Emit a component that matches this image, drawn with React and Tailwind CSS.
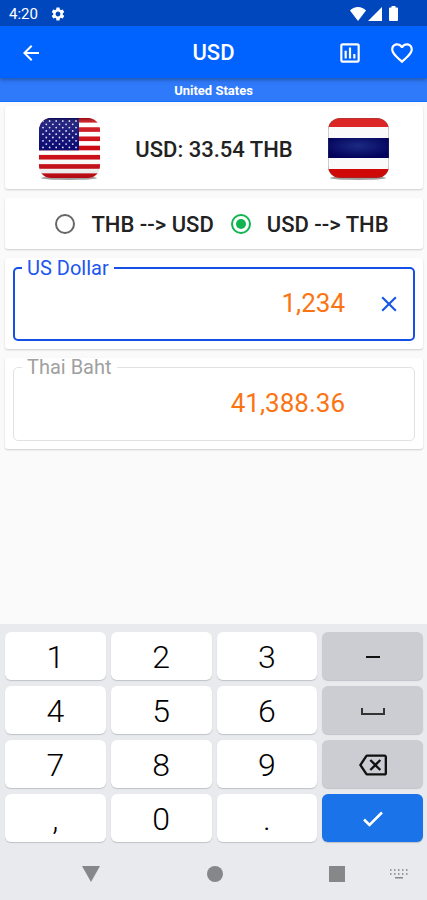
import { useState } from 'react';
import {
  MdArrowBack,
  MdClose,
  MdFavoriteBorder,
  MdOutlineAssessment,
  MdOutlineBackspace,
  MdSettings,
} from 'react-icons/md';

const RATE = 33.54;

function StatusBar() {
  return (
    <div className="flex h-[26px] items-center bg-[#0047bd] pr-[29px] pl-[9px] text-white">
      <span className="pt-[2px] text-[15px] leading-5">4:20</span>
      <MdSettings className="mt-px ml-3 size-4" />
      <div className="mt-px ml-auto flex items-center">
        <svg className="h-[14px] w-4" viewBox="0 0 16 14" fill="currentColor" aria-hidden="true">
          <path d="M8 14 0 3.4C2 1.400 5 0 8 0s6 1.400 8 3.400z" />
        </svg>
        <svg className="ml-[2px] h-[14px] w-[14px]" viewBox="0 0 14 14" fill="currentColor" aria-hidden="true">
          <path d="M14 0v14H0z" />
        </svg>
        <svg className="ml-[7px] h-[15px] w-[9px]" viewBox="0 0 9 15" fill="currentColor" aria-hidden="true">
          <path d="M2.500 0h4v1.500H8a1 1 0 0 1 1 1V14a1 1 0 0 1-1 1H1a1 1 0 0 1-1-1V2.500a1 1 0 0 1 1-1h1.500z" />
        </svg>
      </div>
    </div>
  );
}

function Star({ x, y }) {
  return <circle cx={x} cy={y} r="0.900" fill="#dfe3ff" />;
}

function UsFlag() {
  const stars = [];
  for (let row = 0; row < 9; row += 1) {
    const odd = row % 2;
    for (let col = 0; col < (odd ? 5 : 6); col += 1) {
      stars.push(<Star key={`${row}-${col}`} x={4 + col * 6.600 + odd * 3.300} y={3 + row * 3.300} />);
    }
  }
  return (
    <svg className="h-16 w-[61px]" viewBox="0 0 61 64" role="img" aria-label="United States flag">
      <defs>
        <clipPath id="us-clip">
          <rect width="61" height="60" rx="12" />
        </clipPath>
        <linearGradient id="us-shade" x1="0" y1="0" x2="0" y2="1">
          <stop offset="0" stopColor="#000" stopOpacity=".3" />
          <stop offset=".08" stopColor="#fff" stopOpacity=".12" />
          <stop offset=".5" stopColor="#fff" stopOpacity="0" />
          <stop offset="1" stopColor="#000" stopOpacity=".12" />
        </linearGradient>
      </defs>
      <ellipse cx="30" cy="60" rx="28" ry="2" fill="#777" opacity=".7" />
      <g clipPath="url(#us-clip)">
        <rect width="61" height="60" fill="#fff" />
        {[0, 1, 2, 3, 4, 5, 6].map((i) => (
          <rect key={i} y={i * 9.230} width="61" height="4.620" fill="#cc0a14" />
        ))}
        <rect width="40" height="32.300" fill="#0b0b72" />
        {stars}
        <rect width="61" height="60" fill="url(#us-shade)" />
      </g>
    </svg>
  );
}

function ThaiFlag() {
  return (
    <svg className="h-16 w-[61px]" viewBox="0 0 61 64" role="img" aria-label="Thailand flag">
      <defs>
        <clipPath id="th-clip">
          <rect width="61" height="60" rx="12" />
        </clipPath>
        <radialGradient id="th-blue" cx=".5" cy=".4" r=".6">
          <stop offset="0" stopColor="#1c2a82" />
          <stop offset="1" stopColor="#03035c" />
        </radialGradient>
      </defs>
      <ellipse cx="30" cy="60" rx="28" ry="2" fill="#777" opacity=".7" />
      <g clipPath="url(#th-clip)">
        <rect width="61" height="60" fill="#fafafa" />
        <rect width="61" height="9" fill="#dc2626" />
        <rect y="20" width="61" height="20" fill="url(#th-blue)" />
        <rect y="51" width="61" height="9" fill="#cf0808" />
        <rect width="61" height="60" rx="12" fill="none" stroke="#555" strokeOpacity=".5" />
      </g>
    </svg>
  );
}

function Direction({ value, label, checked, onChange }) {
  return (
    <label className="flex items-center gap-4">
      <input
        type="radio"
        name="direction"
        value={value}
        checked={checked}
        onChange={onChange}
        className="grid size-5 appearance-none place-items-center rounded-full border-2 border-[#666] before:size-[10px] before:rounded-full checked:border-[#10b552] checked:before:bg-[#10b552]"
      />
      <span>{label}</span>
    </label>
  );
}

function Key({ label, tone = 'bg-white', children, onClick }) {
  return (
    <button
      type="button"
      aria-label={label}
      onClick={onClick}
      className={`flex h-12 items-center justify-center rounded-md pt-[2px] text-[32px] leading-none font-light text-black shadow-[0_1px_1px_#bfc2c8] ${tone}`}
    >
      {children}
    </button>
  );
}

const card = 'rounded-[3px] bg-white shadow-[0_1px_2px_rgba(0,0,0,0.18)]';
const grey = 'bg-[#cccdd3]';

export default function App() {
  const [amount, setAmount] = useState('1,234');
  const [direction, setDirection] = useState('usd-thb');

  const number = Number(amount.replace(/,/g, '')) || 0;
  const converted = (direction === 'usd-thb' ? number * RATE : number / RATE).toLocaleString('en-US', {
    minimumFractionDigits: 2,
    maximumFractionDigits: 2,
  });
  const type = (char) => () => setAmount((current) => current + char);

  return (
    <div className="flex min-h-screen flex-col bg-[#fafafa] font-['Roboto',sans-serif] text-[#222]">
      <StatusBar />
      <header className="relative grid h-[52px] grid-cols-[1fr_auto_1fr] items-center bg-[#0062ff] px-3 pt-[2px] text-white shadow-[0_2px_4px_rgba(0,0,0,0.3)]">
        <button type="button" aria-label="Back" className="ml-[7px] justify-self-start">
          <MdArrowBack className="size-6" />
        </button>
        <h1 className="text-[22px] leading-7 font-medium">USD</h1>
        <div className="flex items-center gap-[26px] justify-self-end">
          <button type="button" aria-label="Chart">
            <MdOutlineAssessment className="size-[26px]" />
          </button>
          <button type="button" aria-label="Add to favourites">
            <MdFavoriteBorder className="size-[26px]" />
          </button>
        </div>
      </header>
      <p className="h-6 border-b border-[#0d72ff] bg-[#2f7afb] text-center text-[13px] leading-[25px] font-bold text-white">
        United States
      </p>

      <main className="flex flex-col gap-[9px] pt-1 pr-1 pb-4 pl-[5px]">
        <section className={`flex h-[83px] items-center justify-between px-[34px] pt-1 ${card}`}>
          <UsFlag />
          <p className="text-[22px] leading-7 font-medium">USD: 33.54 THB</p>
          <ThaiFlag />
        </section>

        <div
          role="radiogroup"
          aria-label="Direction"
          className={`flex h-[51px] items-center justify-center gap-[17px] pt-px pl-4 text-[22px] font-medium ${card}`}
        >
          <Direction
            value="thb-usd"
            label="THB --> USD"
            checked={direction === 'thb-usd'}
            onChange={() => setDirection('thb-usd')}
          />
          <Direction
            value="usd-thb"
            label="USD --> THB"
            checked={direction === 'usd-thb'}
            onChange={() => setDirection('usd-thb')}
          />
        </div>

        <section className={`px-2 pb-2 ${card}`}>
          <fieldset className="min-w-0 rounded-[5px] border-2 border-[#1450e6] pr-[11px] pl-3">
            <legend className="-ml-[5px] px-[5px] text-[20px] leading-5 text-[#1c55f0]">
              <label htmlFor="usd">US Dollar</label>
            </legend>
            <div className="flex h-[61px] items-center gap-[31px] pb-[10px]">
              <input
                id="usd"
                type="text"
                inputMode="decimal"
                value={amount}
                onChange={(event) => setAmount(event.target.value)}
                className="h-9 min-w-0 flex-1 text-right text-[26px] text-[#fb7414] outline-none"
              />
              <button type="button" aria-label="Clear" onClick={() => setAmount('')}>
                <MdClose className="size-[26px] text-[#1457e8]" />
              </button>
            </div>
          </fieldset>
        </section>

        <section className={`px-2 pb-2 ${card}`}>
          <fieldset className="min-w-0 rounded-[5px] border border-[#e2e2e2] pr-3 pl-[13px]">
            <legend className="-ml-[5px] px-[5px] text-[20px] leading-[18px] text-[#a0a0a0]">
              <label htmlFor="thb">Thai Baht</label>
            </legend>
            <div className="flex h-[64px] items-center pr-[57px] pb-[10px]">
              <input
                id="thb"
                type="text"
                readOnly
                value={converted}
                className="h-9 min-w-0 flex-1 text-right text-[26px] text-[#fb7414] outline-none"
              />
            </div>
          </fieldset>
        </section>
      </main>

      <footer className="mt-auto bg-[#e8eaed] pt-2">
        <div className="grid grid-cols-4 gap-x-[5px] gap-y-[6px] pr-1 pl-[5px]">
          <Key onClick={type('1')}>1</Key>
          <Key onClick={type('2')}>2</Key>
          <Key onClick={type('3')}>3</Key>
          <Key label="Minus" tone={grey} onClick={type('-')}>
            <span className="h-[2px] w-[14px] bg-[#111]" />
          </Key>
          <Key onClick={type('4')}>4</Key>
          <Key onClick={type('5')}>5</Key>
          <Key onClick={type('6')}>6</Key>
          <Key label="Space" tone={grey}>
            <svg className="h-[7px] w-6" viewBox="0 0 24 7" fill="none" stroke="#333" strokeWidth="2" aria-hidden="true">
              <path d="M1 0v6h22V0" />
            </svg>
          </Key>
          <Key onClick={type('7')}>7</Key>
          <Key onClick={type('8')}>8</Key>
          <Key onClick={type('9')}>9</Key>
          <Key label="Backspace" tone={grey} onClick={() => setAmount((current) => current.slice(0, -1))}>
            <MdOutlineBackspace className="size-7 text-[#111]" />
          </Key>
          <Key onClick={type(',')}>,</Key>
          <Key onClick={type('0')}>0</Key>
          <Key onClick={type('.')}>.</Key>
          <Key label="Done" tone="bg-[#1a73e8]">
            <svg className="h-4 w-5" viewBox="0 0 20 16" fill="none" stroke="#fff" strokeWidth="2.500" aria-hidden="true">
              <path d="M1 8.500 6.500 14 19 1.500" />
            </svg>
          </Key>
        </div>
        <nav className="flex h-[58px] items-center pt-[6px] text-[#868789]" aria-label="System">
          <div className="flex flex-1 items-center justify-between pl-[82px]">
            <button type="button" aria-label="Hide keyboard">
              <svg className="h-4 w-[18px]" viewBox="0 0 18 16" fill="currentColor">
                <path d="M0 0h18L9 16z" />
              </svg>
            </button>
            <button type="button" aria-label="Home" className="size-4 rounded-full bg-current" />
            <button type="button" aria-label="Recent apps" className="size-4 bg-current" />
          </div>
          <button type="button" aria-label="Switch keyboard" className="mr-[19px] ml-[45px]">
            <svg className="h-3 w-[18px]" viewBox="0 0 18 12" fill="currentColor">
              {[0, 4, 8, 12, 16].map((x) => (
                <g key={x} opacity=".8">
                  <rect x={x} y="1" width="1.500" height="2" />
                  <rect x={x} y="5" width="1.500" height="2" />
                </g>
              ))}
              <rect x="5" y="9" width="8" height="1.500" />
            </svg>
          </button>
        </nav>
      </footer>
    </div>
  );
}
